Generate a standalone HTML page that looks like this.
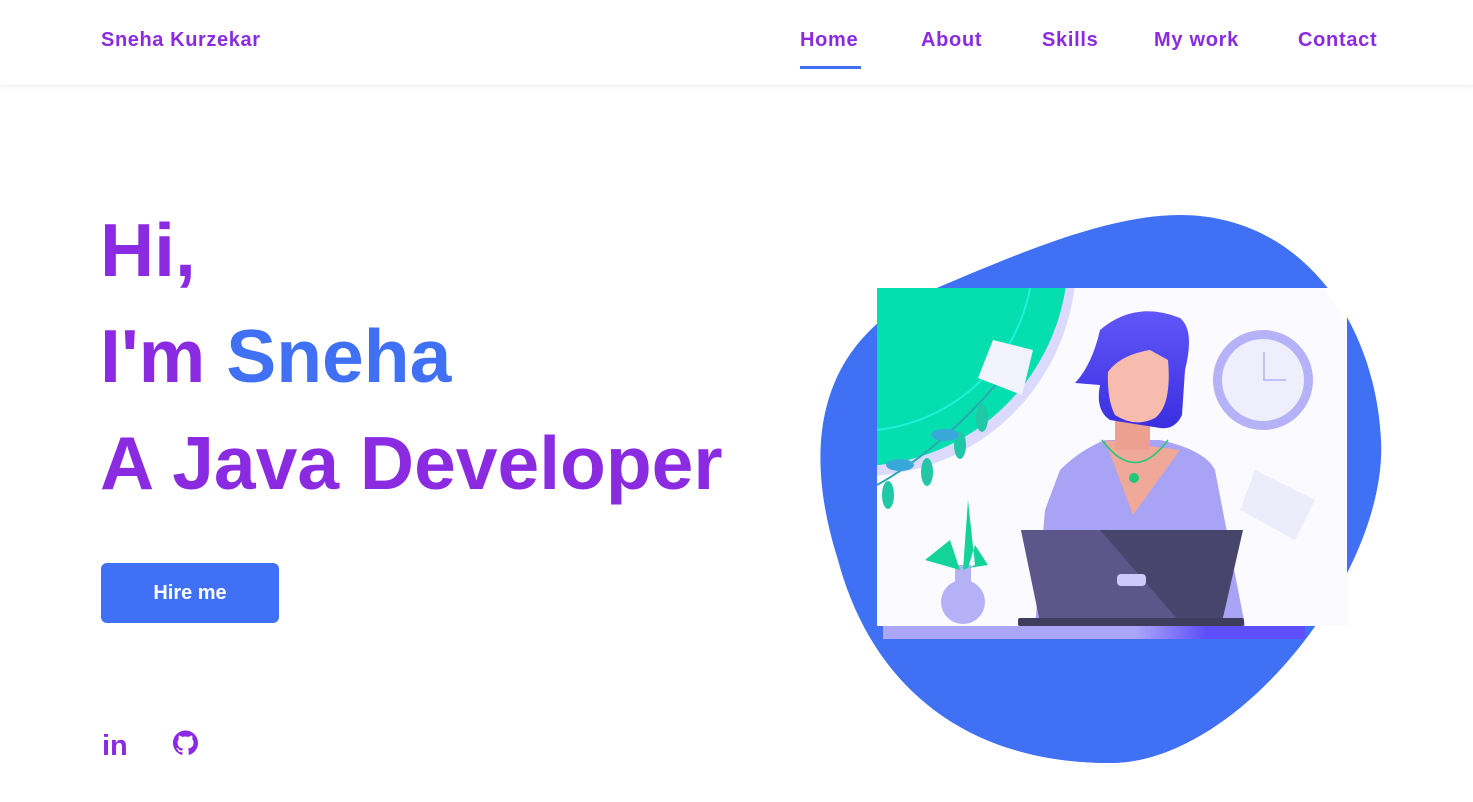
<!DOCTYPE html>
<html><head><meta charset="utf-8"><style>
*{margin:0;padding:0;box-sizing:border-box}
body{width:1473px;height:802px;overflow:hidden;background:#fff;font-family:"Liberation Sans",sans-serif;position:relative}
header{position:absolute;left:0;top:0;width:1473px;height:86px;box-shadow:0 1px 4px rgba(0,0,0,.06);border-bottom:1px solid #f1f1f4}
.logo{position:absolute;left:101px;top:29px;font-size:20px;font-weight:bold;color:#8a2be2;letter-spacing:.6px}
nav a{position:absolute;top:29px;font-size:20px;font-weight:bold;color:#8a2be2;text-decoration:none;letter-spacing:.7px}
.ul{position:absolute;left:800px;top:66px;width:61px;height:3px;background:#4070f4}
.h{position:absolute;left:100px;font-size:75px;font-weight:bold;color:#8a2be2;line-height:1;white-space:nowrap}
.btn{position:absolute;left:101px;top:563px;width:178px;height:60px;background:#4070f4;border-radius:6px;color:#fff;font-size:20px;font-weight:bold;text-align:center;line-height:60px}
</style></head><body>
<header>
<div class="logo">Sneha Kurzekar</div>
<nav>
<a style="left:800px">Home</a><a style="left:921px">About</a><a style="left:1042px">Skills</a><a style="left:1154px">My work</a><a style="left:1298px">Contact</a>
</nav>
<div class="ul"></div>
</header>
<div class="h" style="top:213px">Hi,</div>
<div class="h" style="top:319px">I'm <span style="color:#4070f4">Sneha</span></div>
<div class="h" style="top:426px">A Java Developer</div>
<div class="btn">Hire me</div>
<svg style="position:absolute;left:0;top:0" width="1473" height="802">
<text x="102" y="755" font-family="Liberation Sans" font-weight="bold" font-size="29" fill="#8a2be2">in</text>
<g transform="translate(173 730.5) scale(1.5625)" fill="#8a2be2"><path d="M8 0C3.58 0 0 3.58 0 8c0 3.54 2.29 6.530 5.47 7.59.4.07.55-.17.55-.38 0-.19-.01-.82-.01-1.49-2.01.37-2.530-.49-2.690-.94-.09-.23-.48-.94-.82-1.13-.28-.15-.68-.52-.01-.53.63-.01 1.08.58 1.23.82.72 1.21 1.87.87 2.33.66.07-.52.28-.87.51-1.07-1.78-.2-3.64-.89-3.64-3.95 0-.87.31-1.59.82-2.15-.08-.2-.36-1.02.08-2.12 0 0 .67-.21 2.2.82.64-.18 1.32-.27 2-.27.68 0 1.36.09 2 .27 1.53-1.04 2.2-.82 2.2-.82.44 1.1.16 1.92.08 2.12.51.56.82 1.27.82 2.15 0 3.07-1.87 3.75-3.65 3.950.29.25.54.73.54 1.48 0 1.07-.01 1.930-.01 2.2 0 .21.15.46.55.38A8.013 8.013 0 0016 8c0-4.42-3.58-8-8-8z"/></g>
<defs>
<clipPath id="b"><path d="M1180 215 C1300 215 1375 320 1381 440 C1388 570 1240 763 1110 763 C960 763 870 680 838 560 C800 440 822 345 920 295 C1000 262 1100 215 1180 215Z"/></clipPath>
<clipPath id="r"><rect x="877" y="288" width="470" height="338"/></clipPath>
<linearGradient id="desk" x1="0" x2="1"><stop offset=".55" stop-color="#aca6f8"/><stop offset=".7" stop-color="#5f4ff8"/></linearGradient>
<linearGradient id="hair" x1="0" y1="0" x2="0" y2="1"><stop offset="0" stop-color="#6156f8"/><stop offset="1" stop-color="#3a2fe0"/></linearGradient>
</defs>
<g clip-path="url(#b)">
<rect x="800" y="200" width="600" height="580" fill="#4070f4"/>
</g>
<rect x="877" y="288" width="470" height="338" fill="#fafaff"/>
<path d="M1323 288 L1347 288 L1347 330 C1340 310 1332 298 1323 288Z" fill="#fff"/>
<g clip-path="url(#r)">
<circle cx="862" cy="262" r="214" fill="#dcdafc"/>
<circle cx="858" cy="256" r="210" fill="#05dfb0"/>
<circle cx="858" cy="256" r="175" fill="none" stroke="#1ff0d8" stroke-width="2"/>
<path d="M877 485 Q940 450 1000 380" stroke="#2aa8b0" stroke-width="2" fill="none"/>
<ellipse cx="888" cy="495" rx="6" ry="14" fill="#20c8a8"/><ellipse cx="927" cy="472" rx="6" ry="14" fill="#20c8a8"/><ellipse cx="960" cy="445" rx="6" ry="14" fill="#20c8a8"/><ellipse cx="982" cy="418" rx="6" ry="14" fill="#20c8a8"/><ellipse cx="900" cy="465" rx="14" ry="6" fill="#38a8d8"/><ellipse cx="945" cy="435" rx="14" ry="6" fill="#38a8d8"/>
<path d="M993 340 L1033 350 L1022 395 L978 378Z" fill="#f2f2fc"/>
<path d="M1255 470 L1315 500 L1295 540 L1240 510Z" fill="#ececfb"/>
<circle cx="1263" cy="380" r="50" fill="#b5b2f8"/><circle cx="1263" cy="380" r="41" fill="#eeeefc"/>
<path d="M1264 352 V380 H1286" stroke="#b5b2f8" stroke-width="1.5" fill="none"/>
<path d="M1060 470 Q1080 450 1105 440 L1160 440 Q1205 450 1215 470 L1240 600 L1245 626 L1035 626 L1045 510Z" fill="#a9a3f6"/>
<path d="M1105 440 L1133 515 L1180 450Z" fill="#f0a898"/>
<rect x="1115" y="410" width="35" height="40" fill="#eba090"/>
<path d="M1100 330 Q1135 300 1180 318 Q1195 330 1185 370 L1182 415 Q1175 430 1160 428 L1110 420 Q1095 410 1100 385 L1075 383 Q1092 365 1100 330Z" fill="url(#hair)"/>
<path d="M1108 372 Q1120 355 1150 350 L1168 360 Q1172 405 1155 418 Q1135 428 1115 415 Q1107 400 1108 372Z" fill="#f7bcae"/>
<path d="M1102 440 Q1135 485 1168 440" stroke="#22c87a" stroke-width="1.5" fill="none"/><circle cx="1134" cy="478" r="5" fill="#22c87a"/>
<path d="M1021 530 L1243 530 L1222 622 L1040 622Z" fill="#48456c"/>
<path d="M1021 530 L1100 530 L1180 622 L1040 622Z" fill="#6a63a0" opacity=".6"/>
<rect x="1117" y="574" width="29" height="12" rx="4" fill="#cfc9fb"/>
<rect x="1018" y="618" width="226" height="8" rx="2" fill="#3f3d5e"/>
<circle cx="963" cy="602" r="22" fill="#b5b1f6"/><rect x="955" y="565" width="16" height="25" fill="#b5b1f6"/>
<path d="M963 570 L968 500 L975 565Z M960 570 L925 560 L950 540Z M968 568 L988 565 L975 545Z" fill="#14d39a"/>
</g>
<g clip-path="url(#b)">
<rect x="877" y="626" width="470" height="13" fill="url(#desk)"/>
<rect x="800" y="639" width="600" height="140" fill="#4070f4"/>
<rect x="800" y="626" width="83" height="13" fill="#4070f4"/>
<rect x="1305" y="626" width="80" height="13" fill="#4070f4"/>
</g>
</svg>
</body></html>
